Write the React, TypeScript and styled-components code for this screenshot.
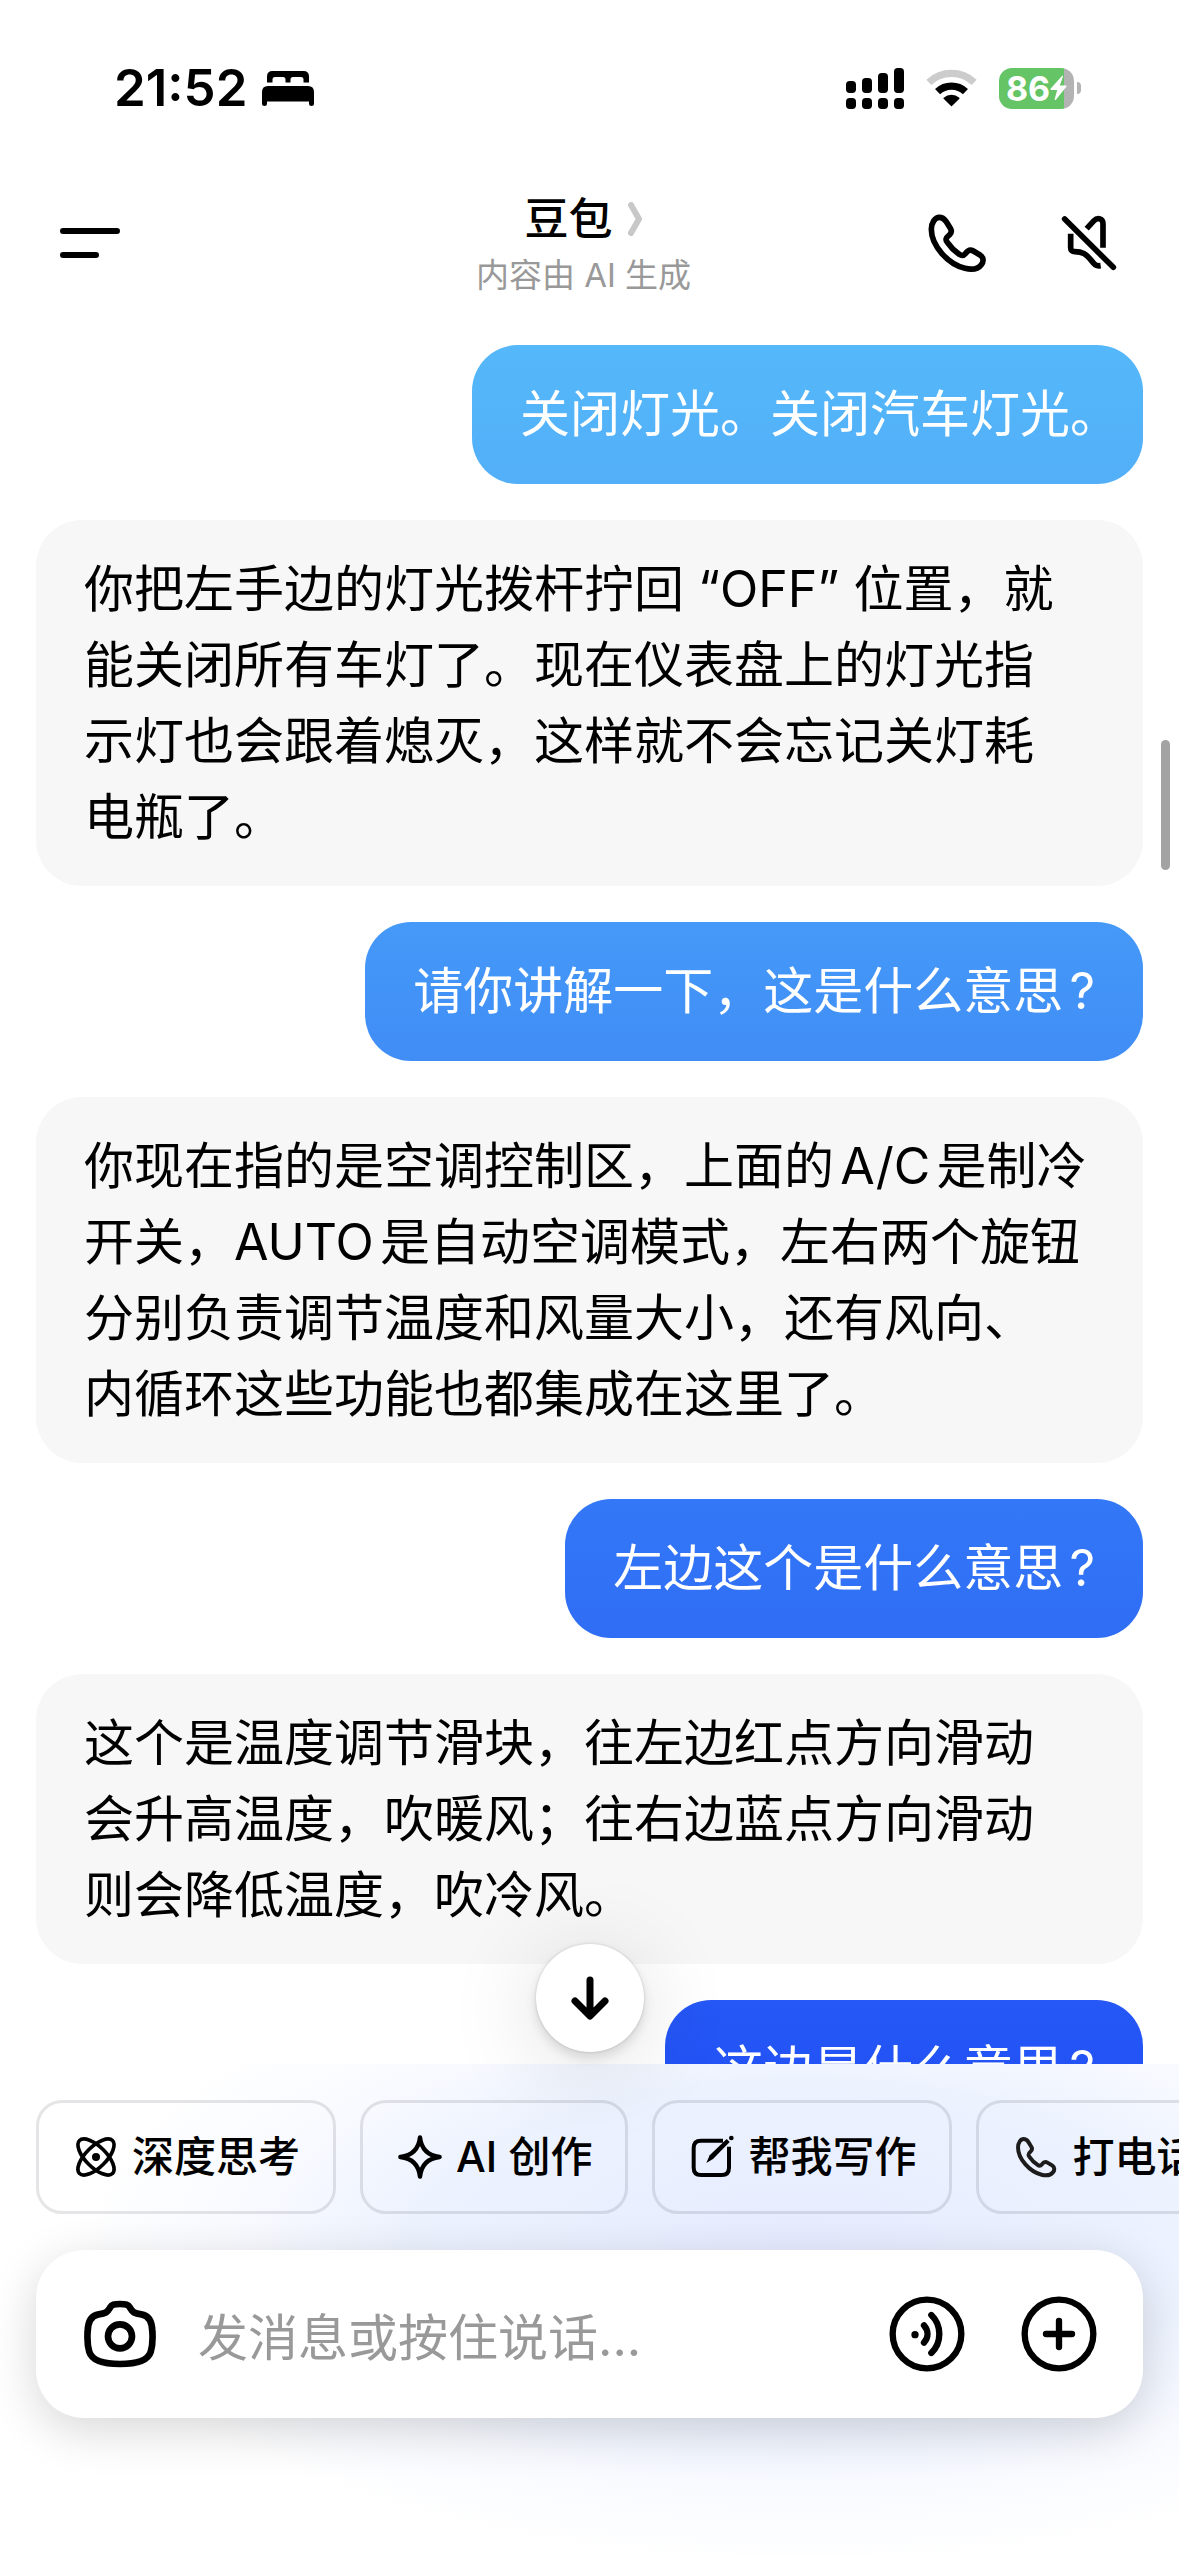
import React from "react";
import styled, { createGlobalStyle } from "styled-components";

const GlobalStyle = createGlobalStyle`
  *, *::before, *::after { box-sizing: border-box; }
  html, body { margin: 0; padding: 0; background: #fff; }
  body {
    font-family: Inter, "Noto Sans CJK SC", sans-serif;
    color: #000;
    -webkit-font-smoothing: antialiased;
  }
  button, input { font: inherit; color: inherit; }
`;

const Screen = styled.div`
  display: flex;
  flex-direction: column;
  height: 100vh;
  overflow: hidden;
  background: #fff;
`;

/* ---------- status bar ---------- */

const StatusBar = styled.div`
  flex: none;
  display: flex;
  align-items: center;
  justify-content: space-between;
  height: 176px;
  padding: 0 98px 0 114px;
`;

const StatusGroup = styled.div<{ $gap: number }>`
  display: flex;
  align-items: center;
  gap: ${(p) => p.$gap}px;
`;

const Clock = styled.time`
  font-size: 51px;
  line-height: 60px;
  font-weight: 600;
`;

const Battery = styled.div`
  display: flex;
  align-items: center;
  gap: 3px;
`;

const BatteryBody = styled.div<{ $level: number }>`
  display: flex;
  align-items: center;
  justify-content: center;
  width: 75px;
  height: 41px;
  border-radius: 13px;
  color: #fff;
  font-size: 34px;
  line-height: 41px;
  font-weight: 700;
  background: linear-gradient(90deg, #65c466 ${(p) => p.$level}%, #b3b3b3 ${(p) => p.$level}%);
`;

const BatteryNub = styled.div`
  width: 4px;
  height: 12px;
  border-radius: 0 4px 4px 0;
  background: #b3b3b3;
`;

/* ---------- header ---------- */

const Header = styled.header`
  flex: none;
  display: grid;
  grid-template-columns: 1fr auto 1fr;
  align-items: center;
  height: 133px;
  padding: 0 60px;
`;

const IconButton = styled.button<{ $size: number }>`
  flex: none;
  display: flex;
  align-items: center;
  justify-content: center;
  width: ${(p) => p.$size}px;
  height: ${(p) => p.$size}px;
  padding: 0;
  border: 0;
  background: none;
  cursor: pointer;
`;

const HeaderActions = styled.div`
  display: flex;
  justify-content: flex-end;
  gap: 72px;
`;

const TitleBlock = styled.div`
  display: flex;
  flex-direction: column;
  align-items: center;
  margin-right: 12px;
  padding-top: 8px;
`;

const TitleButton = styled.button`
  display: flex;
  align-items: center;
  gap: 16px;
  padding: 0;
  border: 0;
  background: none;
  font-size: 44px;
  line-height: 56px;
  font-weight: 500;
  cursor: pointer;
`;

const Subtitle = styled.p`
  margin: 0;
  font-size: 33px;
  line-height: 56px;
  color: #999;
`;

/* ---------- conversation ---------- */

const Conversation = styled.main`
  position: relative;
  z-index: 1;
  flex: 1;
  min-height: 0;
`;

const MessageList = styled.ol`
  display: flex;
  flex-direction: column;
  gap: 36px;
  height: 100%;
  margin: 0;
  padding: 36px;
  list-style: none;
  overflow-y: auto;
  scrollbar-width: none;
`;

const Bubble = styled.li<{ $from?: string; $to?: string }>`
  flex: none;
  align-self: ${(p) => (p.$from ? "flex-end" : "stretch")};
  padding: 31px 48px ${(p) => (p.$from ? 32 : 31)}px;
  border-radius: 46px;
  font-size: 50px;
  line-height: 76px;
  white-space: pre-line;
  text-autospace: normal;
  color: ${(p) => (p.$from ? "#fff" : "#000")};
  background: ${(p) => (p.$from ? `linear-gradient(${p.$from}, ${p.$to})` : "#f7f7f7")};
`;

const HalfWidth = styled.span`
  font-feature-settings: "halt";
`;

const ScrollThumb = styled.div`
  position: absolute;
  top: 431px;
  right: 9px;
  width: 9px;
  height: 130px;
  border-radius: 5px;
  background: #a3a3a3;
`;

const ScrollDown = styled.button`
  position: absolute;
  left: 50%;
  bottom: 12px;
  display: flex;
  align-items: center;
  justify-content: center;
  width: 108px;
  height: 108px;
  margin-left: -54px;
  padding: 0;
  border: 0;
  border-radius: 50%;
  background: #fff;
  box-shadow: 0 0 3px rgba(0, 0, 0, 0.16), 0 6px 12px rgba(0, 0, 0, 0.12), 0 12px 96px rgba(0, 0, 0, 0.14);
  cursor: pointer;
`;

/* ---------- bottom panel ---------- */

const Panel = styled.footer`
  flex: none;
  padding: 36px 0 138px;
  background: radial-gradient(
      ellipse 62% 64% at 68% 38%,
      #e6ecff 0%,
      #ecf2fe 52%,
      #f8faff 76%,
      #fff 100%
    );
`;

const Chips = styled.div`
  display: flex;
  gap: 24px;
  padding: 0 36px;
  overflow-x: auto;
  scrollbar-width: none;
`;

const Chip = styled.button`
  flex: none;
  display: flex;
  align-items: center;
  gap: 12px;
  height: 114px;
  padding: 0 33px;
  border: 3px solid rgba(0, 0, 20, 0.1);
  border-radius: 26px;
  background: transparent;
  font-size: 42px;
  line-height: 60px;
  font-weight: 500;
  white-space: nowrap;
  cursor: pointer;
`;

const ChipIcon = styled.span`
  display: flex;
  align-items: center;
  justify-content: center;
  width: 48px;
  height: 48px;
`;

const Composer = styled.form`
  display: flex;
  align-items: center;
  height: 168px;
  margin: 36px 36px 0;
  padding: 0 46px 0 48px;
  border-radius: 48px;
  background: #fff;
  box-shadow: 0 12px 48px rgba(0, 0, 0, 0.16);
`;

const MessageInput = styled.input`
  flex: 1;
  min-width: 0;
  height: 100px;
  margin: 0 42px;
  padding: 8px 0 0;
  border: 0;
  outline: 0;
  background: none;
  font-size: 50px;
  &::placeholder {
    color: #999;
    opacity: 1;
  }
`;

const ComposerActions = styled.div`
  display: flex;
  gap: 56px;
`;

/* ---------- icons ---------- */

const Bed = () => (
  <svg width="52" height="35" viewBox="260 71 52 35" aria-hidden="true">
    <path d="M265 82.5V76.500Q265 71 270.500 71H301.500Q307 71 307 76.500V82.500H301.500V79.500Q301.500 77 299 77H291Q288.500 77 288.500 79.500V82.500H283.500V79.500Q283.500 77 281 77H273Q270.500 77 270.500 79.500V82.500Z" />
    <path d="M260 92Q260 86 266 86H306Q312 86 312 92V104Q312 106 309.500 106Q307 106 307 104V101.500H265V104Q265 106 262.500 106Q260 106 260 104Z" />
  </svg>
);

const Signal = () => (
  <svg width="58" height="41" viewBox="18 51 174 123" aria-label="信号">
    {[90, 81, 66, 51].map((top, i) => (
      <g key={top}>
        <rect x={18 + i * 48} y={top} width="30" height={126 - top} rx="11" />
        <rect x={18 + i * 48} y="141" width="30" height="33" rx="11" />
      </g>
    ))}
  </svg>
);

const Wifi = () => (
  <svg width="51" height="38" viewBox="259 56 152 113" fill="none" aria-label="Wi-Fi">
    <path d="M267.500 95.600A99 99 0 0 1 402.500 95.600" stroke="#ccc" strokeWidth="22" />
    <path d="M293.400 123.400A61 61 0 0 1 376.600 123.400" stroke="#000" strokeWidth="22" />
    <path d="M335 165L313 143A34 34 0 0 1 357 143Z" fill="#000" stroke="#000" strokeWidth="4" strokeLinejoin="round" />
  </svg>
);

const Bolt = () => (
  <svg width="17" height="26" viewBox="637 79 52 78" fill="#fff" aria-hidden="true">
    <path d="M675 80L638 121Q638 124 641 124H659L651 153Q652 156 655 154L688 113Q688 110 685 110H667L677 82Z" />
  </svg>
);

const Menu = () => (
  <svg width="60" height="30" viewBox="0 0 60 30" fill="none" stroke="#000" strokeWidth="6" strokeLinecap="round" aria-hidden="true">
    <path d="M3 3H57M3 27H36" />
  </svg>
);

const Chevron = () => (
  <svg width="14" height="34" viewBox="0 0 14 34" fill="none" stroke="#c8c8c8" strokeWidth="6" strokeLinecap="round" strokeLinejoin="round" aria-hidden="true">
    <path d="M3 3L11 17L3 31" />
  </svg>
);

const Phone = ({ size, color = "#000" }: { size: number; color?: string }) => (
  <svg width={size} height={size} viewBox="261 491 180 180" fill="none" stroke={color} strokeWidth="17" strokeLinejoin="round" aria-hidden="true">
    <path d="M274 540C274 520 285 504 298 504C310 504 314 510 318 516L331 537C336 545 334 551 329 556C316 567 316 571 322 579C333 595 345 606 358 615C366 621 371 619 377 612C384 602 392 600 400 605L420 617C432 625 431 638 424 646C414 659 396 662 375 657C325 645 274 590 274 540Z" />
  </svg>
);

const Muted = () => (
  <svg width="60" height="60" viewBox="657 492 180 180" fill="none" stroke="#000" strokeWidth="17" aria-hidden="true">
    <path d="M674 510L820 655" strokeLinecap="round" />
    <path d="M740 539L762 515C773 504 789 509 789 524V596" />
    <path d="M692 554V596C692 604 697 608 704 608C728 608 738 615 751 631C764 648 768 652 782 650" />
  </svg>
);

const ArrowDown = () => (
  <svg width="38" height="44" viewBox="0 0 38 44" fill="none" stroke="#000" strokeWidth="7" strokeLinecap="round" strokeLinejoin="round" aria-hidden="true">
    <path d="M19 4V39M4 25L19 40L34 25" />
  </svg>
);

const Atom = () => (
  <svg width="48" height="48" viewBox="126 129 144 144" fill="none" stroke="#000" strokeWidth="11" aria-hidden="true">
    <ellipse cx="198" cy="201" rx="70" ry="31" transform="rotate(45 198 201)" />
    <ellipse cx="198" cy="201" rx="70" ry="31" transform="rotate(-45 198 201)" />
    <circle cx="198" cy="201" r="12" fill="#000" stroke="none" />
  </svg>
);

const Sparkle = () => (
  <svg width="48" height="48" viewBox="1095 129 144 144" fill="none" stroke="#000" strokeWidth="13" strokeLinejoin="round" aria-hidden="true">
    <path d="M1167 142C1171 178 1190 197 1226 201C1190 205 1171 224 1167 260C1163 224 1144 205 1108 201C1144 197 1163 178 1167 142Z" />
  </svg>
);

const Compose = () => (
  <svg width="48" height="48" viewBox="19 129 144 144" fill="none" aria-hidden="true">
    <path d="M124 152H58Q36 152 36 174V233Q36 255 58 255H120Q142 255 142 233V170" stroke="#000" strokeWidth="12" />
    <path d="M74 219L84 196L135 147L144 156L94 207Z" fill="#000" />
    <circle cx="149" cy="144" r="7" fill="#000" />
  </svg>
);

const Camera = () => (
  <svg width="72" height="72" viewBox="162 622 216 216" fill="none" stroke="#000" strokeWidth="20" aria-hidden="true">
    <path d="M173 722C174 690 184 674 206 671C228 669 232 664 240 651C246 642 252 640 270 640C288 640 294 642 300 651C308 664 312 669 334 671C356 674 366 690 367 722C369 750 367 768 362 784C353 812 318 820 270 820C222 820 187 812 178 784C173 768 171 750 173 722Z" />
    <circle cx="270" cy="737" r="36" />
  </svg>
);

const Voice = () => (
  <svg width="76" height="76" viewBox="627 618 228 228" fill="none" stroke="#000" strokeWidth="19" strokeLinecap="round" aria-hidden="true">
    <circle cx="741" cy="732" r="103" />
    <circle cx="705" cy="734" r="11" fill="#000" stroke="none" />
    <path d="M732 706C746 722 746 742 732 758M754 675C786 706 786 758 754 789" />
  </svg>
);

const Plus = () => (
  <svg width="76" height="76" viewBox="1023 618 228 228" fill="none" stroke="#000" strokeWidth="19" strokeLinecap="round" aria-hidden="true">
    <circle cx="1137" cy="732" r="103" />
    <path d="M1098 732H1176M1137 693V771" />
  </svg>
);

/* ---------- data ---------- */

type Message = { text: string; from?: string; to?: string };

const messages: Message[] = [
  { text: "关闭灯光。关闭汽车灯光。", from: "#55b8fa", to: "#52aff8" },
  {
    text: "你把左手边的灯光拨杆拧回 “OFF” 位置，就\n能关闭所有车灯了。现在仪表盘上的灯光指\n示灯也会跟着熄灭，这样就不会忘记关灯耗\n电瓶了。",
  },
  { text: "请你讲解一下，这是什么意思?", from: "#4599f8", to: "#408df6" },
  {
    text: "你现在指的是空调控制区，上面的A/C是制冷\n开关，AUTO是自动空调模式，左右两个旋钮\n分别负责调节温度和风量大小，还有风向、\n内循环这些功能也都集成在这里了。",
  },
  { text: "左边这个是什么意思?", from: "#3378f7", to: "#2f6df5" },
  {
    text: "这个是温度调节滑块，往左边红点方向滑动\n会升高温度，吹暖风；往右边蓝点方向滑动\n则会降低温度，吹冷风。",
  },
  { text: "这边是什么意思?", from: "#2558f6", to: "#214df3" },
];

const chips = [
  { label: "深度思考", icon: <Atom /> },
  { label: "AI 创作", icon: <Sparkle /> },
  { label: "帮我写作", icon: <Compose /> },
  { label: "打电话", icon: <Phone size={42} color="#1c1c1c" /> },
];

/* A full stop that closes a sent bubble takes half a cell, so the bubble hugs it. */
const MessageText = ({ message }: { message: Message }) =>
  message.from && message.text.endsWith("。") ? (
    <>
      {message.text.slice(0, -1)}
      <HalfWidth>。</HalfWidth>
    </>
  ) : (
    <>{message.text}</>
  );

export default function App() {
  return (
    <Screen lang="zh-CN">
      <GlobalStyle />
      <StatusBar>
        <StatusGroup $gap={15}>
          <Clock>21:52</Clock>
          <Bed />
        </StatusGroup>
        <StatusGroup $gap={22}>
          <Signal />
          <Wifi />
          <Battery>
            <BatteryBody $level={87}>
              86
              <Bolt />
            </BatteryBody>
            <BatteryNub />
          </Battery>
        </StatusGroup>
      </StatusBar>

      <Header>
        <IconButton $size={60} type="button" aria-label="菜单">
          <Menu />
        </IconButton>
        <TitleBlock>
          <TitleButton type="button">
            豆包
            <Chevron />
          </TitleButton>
          <Subtitle>内容由 AI 生成</Subtitle>
        </TitleBlock>
        <HeaderActions>
          <IconButton $size={60} type="button" aria-label="打电话">
            <Phone size={60} />
          </IconButton>
          <IconButton $size={60} type="button" aria-label="静音">
            <Muted />
          </IconButton>
        </HeaderActions>
      </Header>

      <Conversation>
        <MessageList>
          {messages.map((message) => (
            <Bubble key={message.text} $from={message.from} $to={message.to}>
              <MessageText message={message} />
            </Bubble>
          ))}
        </MessageList>
        <ScrollThumb />
        <ScrollDown type="button" aria-label="回到底部">
          <ArrowDown />
        </ScrollDown>
      </Conversation>

      <Panel>
        <Chips>
          {chips.map((chip) => (
            <Chip key={chip.label} type="button">
              <ChipIcon>{chip.icon}</ChipIcon>
              {chip.label}
            </Chip>
          ))}
        </Chips>
        <Composer onSubmit={(event: React.FormEvent) => event.preventDefault()}>
          <IconButton $size={72} type="button" aria-label="相机">
            <Camera />
          </IconButton>
          <MessageInput type="text" aria-label="消息" placeholder="发消息或按住说话..." />
          <ComposerActions>
            <IconButton $size={76} type="button" aria-label="语音">
              <Voice />
            </IconButton>
            <IconButton $size={76} type="button" aria-label="更多">
              <Plus />
            </IconButton>
          </ComposerActions>
        </Composer>
      </Panel>
    </Screen>
  );
}
